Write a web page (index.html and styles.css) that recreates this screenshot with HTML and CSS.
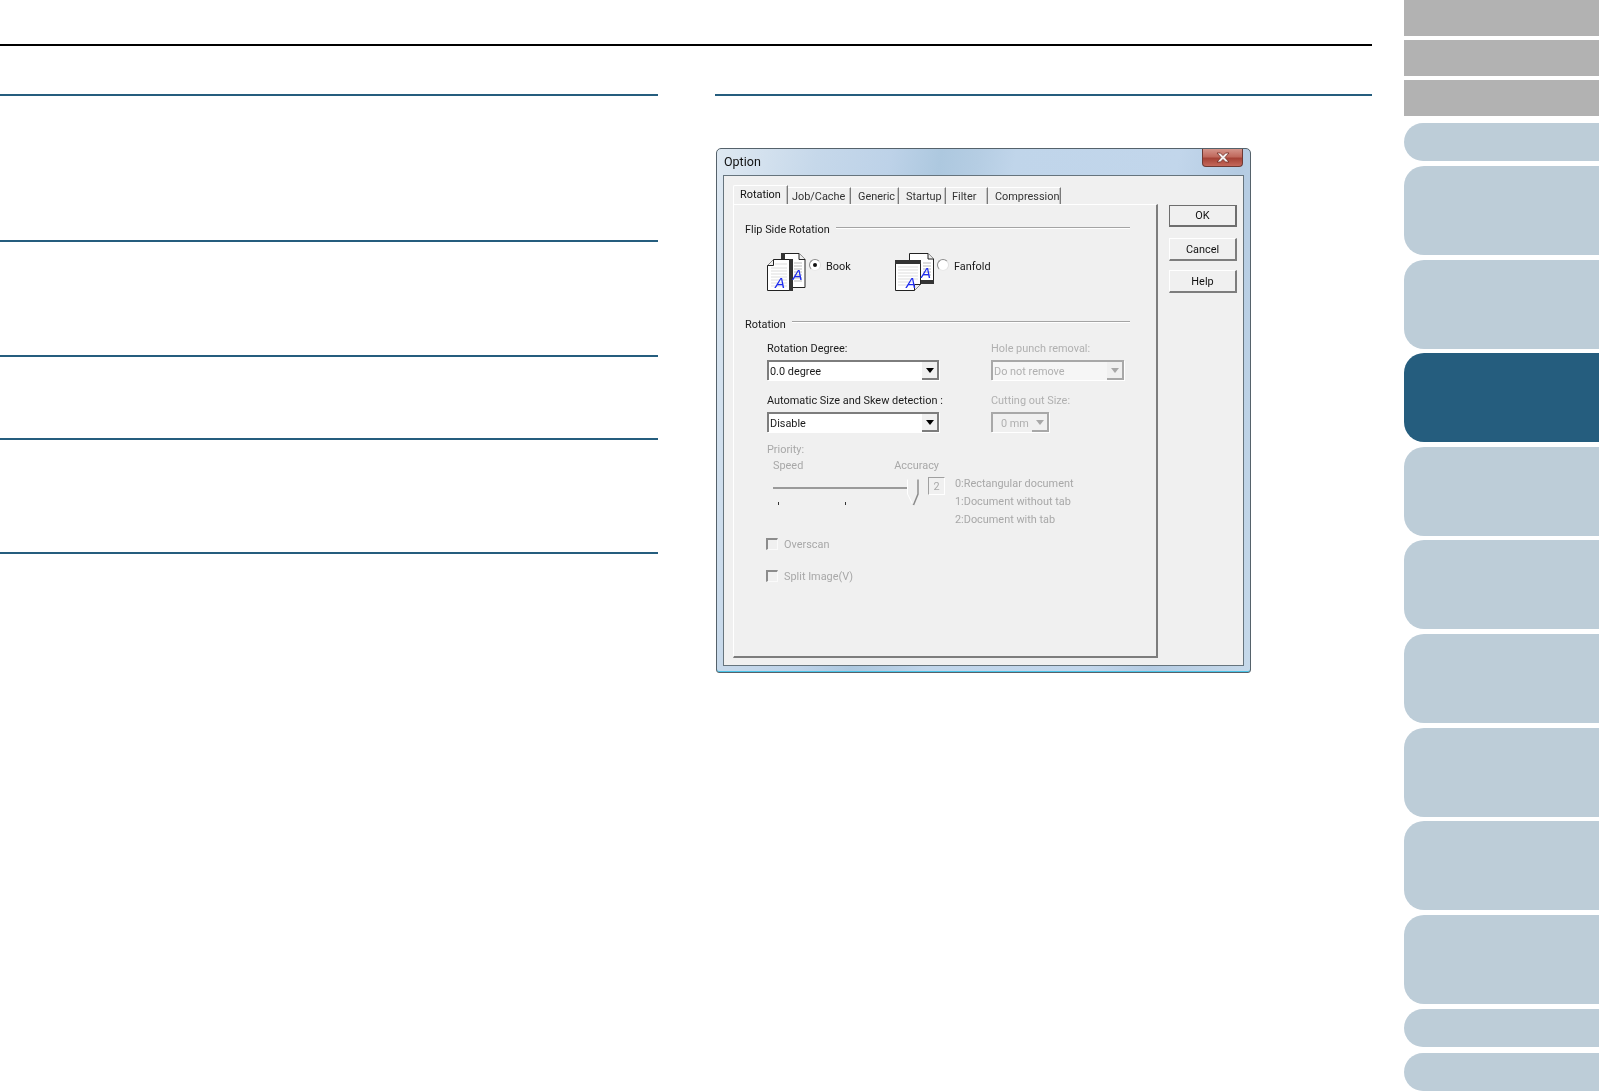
FILE: index.html
```html
<!DOCTYPE html>
<html lang="en">
<head>
<meta charset="utf-8">
<title>Option</title>
<link rel="stylesheet" href="styles.css">
</head>
<body>
<div class="page">
  <main class="main">
    <hr class="top-rule">
    <div class="columns">
      <div class="left-col">
        <section class="sec sec-a"></section>
        <section class="sec sec-b"></section>
        <section class="sec sec-c"></section>
        <section class="sec sec-d"></section>
        <section class="sec sec-e"></section>
      </div>
      <div class="right-col">
        <div class="dialog">
          <div class="titlebar">
            <span class="title">Option</span>
            <span class="close"><svg width="16" height="11" viewBox="0 0 16 11"><path d="M2 1h3.500L8 3.600 10.500 1H14L10 5.500 14 10h-3.500L8 7.400 5.500 10H2L6 5.500z" fill="#f4f0f0" stroke="#6e2a22" stroke-width=".8"/></svg></span>
          </div>
          <div class="client">
            <div class="sheet">
              <div class="tabs">
                <span class="tab tab-active t1">Rotation</span>
                <span class="tab t2">Job/Cache</span>
                <span class="tab t3">Generic</span>
                <span class="tab t4">Startup</span>
                <span class="tab t5">Filter</span>
                <span class="tab t6">Compression</span>
              </div>
              <div class="panel">
                <div class="group-head flip-head"><span>Flip Side Rotation</span><i class="group-line"></i></div>
                <div class="flip-row">
                  <div class="flip-opt opt-book">
                    <svg class="doc-icon" width="39" height="38" viewBox="0 0 39 38">
                      <path d="M14.500.5H32l6 6v28H14.500z" fill="#fff" stroke="#222"/>
                      <path d="M32 .5v6h6" fill="#eee" stroke="#222"/>
                      <rect x="14" y="0" width="4" height="7" fill="#333"/>
                      <path d="M27 10h8M27 13h8M27 16h8M27 19h8M27 22h8M27 25h8M27 28h8" stroke="#bbb"/>
                      <path d="M6.500 6.500H25V37.500H.5V12.500z" fill="#fff" stroke="#222"/>
                      <path d="M6.500 6.500v6H.5" fill="#eee" stroke="#222"/>
                      <rect x="22" y="6" width="4" height="32" fill="#333"/>
                      <path d="M8 11h12M4 15h16M4 18h16M4 21h16M4 24h16M4 27h16M4 30h16M4 33h16" stroke="#ddd"/>
                      <text class="doc-a" x="8" y="34.500">A</text>
                      <text class="doc-a" x="25.500" y="26.500">A</text>
                    </svg>
                    <span class="radio radio-on"></span>
                    <span class="opt-label">Book</span>
                  </div>
                  <div class="flip-opt">
                    <svg class="doc-icon" width="39" height="38" viewBox="0 0 39 38">
                      <path d="M14.500.5H33l5.500 5.500V30.500H14.500z" fill="#fff" stroke="#222"/>
                      <path d="M33 .5V6h5.500" fill="#eee" stroke="#222"/>
                      <rect x="26" y="27" width="13" height="4" fill="#333"/>
                      <path d="M28 10h8M28 13h8M28 16h8M28 19h8M28 22h8" stroke="#bbb"/>
                      <path d="M.5 7.500H25.500V31.500L19.500 37.500H.5z" fill="#fff" stroke="#222"/>
                      <path d="M25.500 31.500h-6v6" fill="#eee" stroke="#222"/>
                      <rect x="0" y="7" width="26" height="4" fill="#333"/>
                      <path d="M3 14h20M3 17h20M3 20h20M3 23h20M3 26h20M3 29h14M3 32h10" stroke="#ddd"/>
                      <text class="doc-a" x="11" y="35">A</text>
                      <text class="doc-a" x="26" y="24.500">A</text>
                    </svg>
                    <span class="radio"></span>
                    <span class="opt-label">Fanfold</span>
                  </div>
                </div>
                <div class="group-head rot-head"><span>Rotation</span><i class="group-line"></i></div>
                <div class="fields">
                  <div class="field">
                    <label class="field-label">Rotation Degree:</label>
                    <div class="combo"><span class="combo-text">0.0 degree</span><span class="combo-btn"><i class="arrow"></i></span></div>
                  </div>
                  <div class="field field-off">
                    <label class="field-label">Hole punch removal:</label>
                    <div class="combo combo-off combo-hole"><span class="combo-text">Do not remove</span><span class="combo-btn"><i class="arrow"></i></span></div>
                  </div>
                  <div class="field">
                    <label class="field-label">Automatic Size and Skew detection :</label>
                    <div class="combo"><span class="combo-text">Disable</span><span class="combo-btn"><i class="arrow"></i></span></div>
                  </div>
                  <div class="field field-off">
                    <label class="field-label">Cutting out Size:</label>
                    <div class="combo combo-off combo-cut"><span class="combo-text combo-mm">0 mm</span><span class="combo-btn"><i class="arrow"></i></span></div>
                  </div>
                </div>
                <div class="priority">
                  <div class="priority-label">Priority:</div>
                  <div class="scale-labels"><span>Speed</span><span>Accuracy</span></div>
                  <div class="slider-row">
                    <div class="slider">
                      <i class="track"></i>
                      <i class="tick tick-1"></i><i class="tick tick-2"></i><i class="tick tick-3"></i>
                      <svg class="thumb" width="12" height="27" viewBox="0 0 12 27"><path d="M.5.500V15L6 26 11 15V.500" fill="#efefef" stroke="#fff"/><path d="M11 .500V15L6.500 26" fill="none" stroke="#8a8a8a" stroke-width="1.500"/></svg>
                    </div>
                    <div class="value-box">2</div>
                    <div class="legend">
                      <div>0:Rectangular document</div>
                      <div>1:Document without tab</div>
                      <div>2:Document with tab</div>
                    </div>
                  </div>
                  <div class="check-row first-check"><span class="check"></span><span class="check-label">Overscan</span></div>
                  <div class="check-row"><span class="check"></span><span class="check-label">Split Image(V)</span></div>
                </div>
              </div>
            </div>
            <div class="buttons">
              <span class="btn btn-default">OK</span>
              <span class="btn btn-cancel">Cancel</span>
              <span class="btn btn-help">Help</span>
            </div>
          </div>
        </div>
      </div>
    </div>
  </main>
  <nav class="side">
    <div class="gray"></div>
    <div class="gray"></div>
    <div class="gray"></div>
    <div class="pill pill-first"></div>
    <div class="tall"></div>
    <div class="tall"></div>
    <div class="tall tall-active"></div>
    <div class="tall"></div>
    <div class="tall"></div>
    <div class="tall"></div>
    <div class="tall"></div>
    <div class="tall"></div>
    <div class="tall"></div>
    <div class="pill pill-a"></div>
    <div class="pill pill-b"></div>
  </nav>
</div>
</body>
</html>
```
FILE: styles.css
```css
* { box-sizing: border-box; }
html, body { margin: 0; padding: 0; background: #fff; }
body { height: 1092px; overflow: hidden; }

.page { display: flex; width: 1599px; height: 1092px; }
.main { width: 1372px; padding-top: 44px; }
.top-rule { margin: 0; border: 0; height: 2px; background: #000; }
.columns { display: grid; grid-template-columns: 658px 657px; column-gap: 57px; margin-top: 48px; }

.sec { border-top: 2px solid #255d7e; }
.sec-a { height: 146px; }
.sec-b { height: 115px; }
.sec-c { height: 83px; }
.sec-d { height: 114px; }
.sec-e { height: 2px; }

.right-col { border-top: 2px solid #255d7e; padding: 52px 0 0 1px; }

/* side navigation */
.side { width: 195px; margin-left: 32px; display: flex; flex-direction: column; }
.gray { height: 36px; margin-bottom: 4px; background: #b2b2b2; }
.pill { height: 38px; border-radius: 19px 0 0 19px; background: #bdcdd8; }
.pill-first { margin-top: 3px; }
.pill-a { margin-top: 5px; }
.pill-b { margin-top: 6px; }
.tall { height: 89px; margin-top: 4.6px; border-radius: 20px 0 0 20px; background: #bdcdd8; }
.pill-first + .tall { margin-top: 5px; }
.tall-active { background: #255d7e; }

/* dialog */
.dialog {
  width: 535px; height: 525px; padding: 0 6px 6px;
  border: 1px solid #55626b; border-radius: 5px 5px 3px 3px;
  box-shadow: inset 0 -1px 0 #49c4e8;
  background: linear-gradient(100deg, #dfe9f2 0, #c6d8ea 16%, #bdd2e8 28%, #adc8df 36%, #b5cde3 42%, #c0d5ea 48%, #c2d6eb 74%, #b4cbe2 84%, #c6d9ea 100%);
  font: 10.9px/16px Roboto, "Liberation Sans", Arial, sans-serif;
  color: #1a1a1a;
  filter: blur(.3px);
}
.titlebar { height: 26px; display: flex; justify-content: space-between; align-items: flex-start; }
.title { font-size: 12.5px; line-height: 16px; margin: 5px 0 0 1px; color: #111; }
.close {
  width: 41px; height: 18px; margin-right: 1px; display: flex; align-items: center; justify-content: center;
  border: 1px solid #6e3a34; border-top: 0; border-radius: 0 0 4px 4px;
  background: linear-gradient(#d4948a 0, #c0695d 45%, #a54236 55%, #c4685b 100%);
}
.client {
  height: 491px; display: flex; padding: 9px 0 0 9px;
  border: 1px solid #66747d; background: #f0f0f0;
}
.sheet { width: 425px; }
.tabs { display: flex; align-items: flex-end; height: 19px; }
.tab {
  height: 17px; padding: 2px 0 0 7px; white-space: nowrap; line-height: 13px;
  border-top: 1px solid #fff; border-right: 1px solid #7a7a7a; box-shadow: inset -1px 0 0 #c4c4c4; color: #333;
}
.tab-active { height: 19px; padding: 2px 0 0 6px; border-left: 1px solid #fff; border-radius: 2px 0 0 0; color: #111; }
.t1 { width: 55px; }
.t2 { width: 63px; padding-left: 4px; }
.t3 { width: 48px; }
.t4 { width: 47px; }
.t5 { width: 42px; padding-left: 6px; }
.t6 { width: 73px; }

.panel {
  height: 454px; padding: 18px 26px 0 11px;
  border-top: 1px solid #fff; border-left: 1px solid #fff;
  border-right: 2px solid #7d7d7d; border-bottom: 2px solid #7d7d7d;
}
.group-head { display: flex; height: 14px; }
.group-line { flex: 1; height: 2px; border-top: 1px solid #a4a4a4; border-bottom: 1px solid #fff; margin-left: 6px; }
.flip-head { margin-top: -1px; }
.flip-head .group-line { margin-top: 5px; }
.rot-head { margin-top: 26px; }
.rot-head .group-line { margin-top: 4px; }

.flip-row { display: flex; margin: 17px 0 0 22px; height: 38px; }
.flip-opt { display: flex; align-items: flex-start; }
.opt-book { width: 128px; }
.doc-icon { display: block; }
.doc-a { font: italic 15px "Liberation Sans", Arial, sans-serif; fill: #1d2bf0; }
.radio {
  width: 12px; height: 12px; margin: 6px 0 0 3px; border-radius: 50%; position: relative;
  border: 1px solid #8c8c8c; border-right-color: #e0e0e0; border-bottom-color: #e8e8e8; background: #fff;
}
.radio-on::after { content: ""; position: absolute; left: 3px; top: 3px; width: 4px; height: 4px; border-radius: 50%; background: #111; }
.opt-label { margin: 6px 0 0 5px; }

.fields {
  display: grid; grid-template-columns: 172px 171px; column-gap: 52px; row-gap: 13px;
  margin: 10px 0 0 22px;
}
.field-label { display: block; height: 14px; margin-bottom: 5px; white-space: nowrap; }
.field-off { color: #b0b0b0; }
.combo {
  width: 172px; height: 20px; display: flex; justify-content: space-between; background: #fff;
  border-top: 2px solid #7d7d7d; border-left: 2px solid #7d7d7d;
  box-shadow: 1px 1px 0 #fff;
}
.combo-text { padding: 2px 0 0 1px; line-height: 15px; }
.combo-btn {
  width: 17px; height: 18px; display: flex; align-items: center; justify-content: center;
  background: #f0f0f0; border-right: 2px solid #7d7d7d; border-bottom: 2px solid #7d7d7d;
}
.arrow { width: 0; height: 0; border: 4px solid transparent; border-top: 5px solid #000; border-bottom: 0; }
.combo-off { background: #f6f6f6; border-color: #a8a8a8; }
.combo-off .combo-btn { border-color: #a8a8a8; }
.combo-off .arrow { border-top-color: #a8a8a8; }
.combo-hole { width: 133px; }
.combo-cut { width: 58px; background: #f0f0f0; }
.combo-mm { padding-left: 8px; }

.priority { margin: 10px 0 0 22px; color: #a8a8a8; }
.priority-label { height: 14px; margin-bottom: 2px; }
.scale-labels { display: flex; justify-content: space-between; width: 172px; padding-left: 6px; height: 14px; }
.slider-row { display: flex; margin-top: 5px; height: 53px; }
.slider { width: 161px; height: 53px; position: relative; }
.track { position: absolute; left: 6px; top: 10px; width: 134px; height: 2px; background: #9a9a9a; }
.tick { position: absolute; top: 25px; width: 1px; height: 3px; background: #333; }
.tick-1 { left: 11px; }
.tick-2 { left: 78px; }
.tick-3 { left: 145px; }
.thumb { position: absolute; left: 140px; top: 2px; }
.value-box {
  width: 17px; height: 18px; text-align: center; line-height: 17px;
  border: 1px solid #a0a0a0; border-right-color: #fff; border-bottom-color: #fff;
}
.legend { margin-left: 10px; line-height: 17.750px; margin-top: -2px; white-space: nowrap; }
.check-row { display: flex; align-items: center; height: 12px; margin: 20px 0 0 -1px; }
.first-check { margin-top: 8px; }
.check {
  width: 12px; height: 12px; margin-right: 6px;
  border-style: solid; border-width: 2px 1px 1px 2px;
  border-color: #8c8c8c #fafafa #fafafa #8c8c8c;
}
.check-label { margin-top: 2px; }

.buttons { width: 68px; margin-left: 11px; padding-top: 20px; display: flex; flex-direction: column; }
.btn {
  height: 23px; text-align: center; line-height: 22px; color: #111;
  border: 1px solid #fff; border-right: 2px solid #7d7d7d; border-bottom: 2px solid #7d7d7d;
}
.btn-default { height: 22px; line-height: 20px; border: 2px solid #6e6e6e; border-top-width: 1px; border-left-width: 1px; }
.btn-cancel { margin-top: 11px; }
.btn-help { margin-top: 9px; }
```
